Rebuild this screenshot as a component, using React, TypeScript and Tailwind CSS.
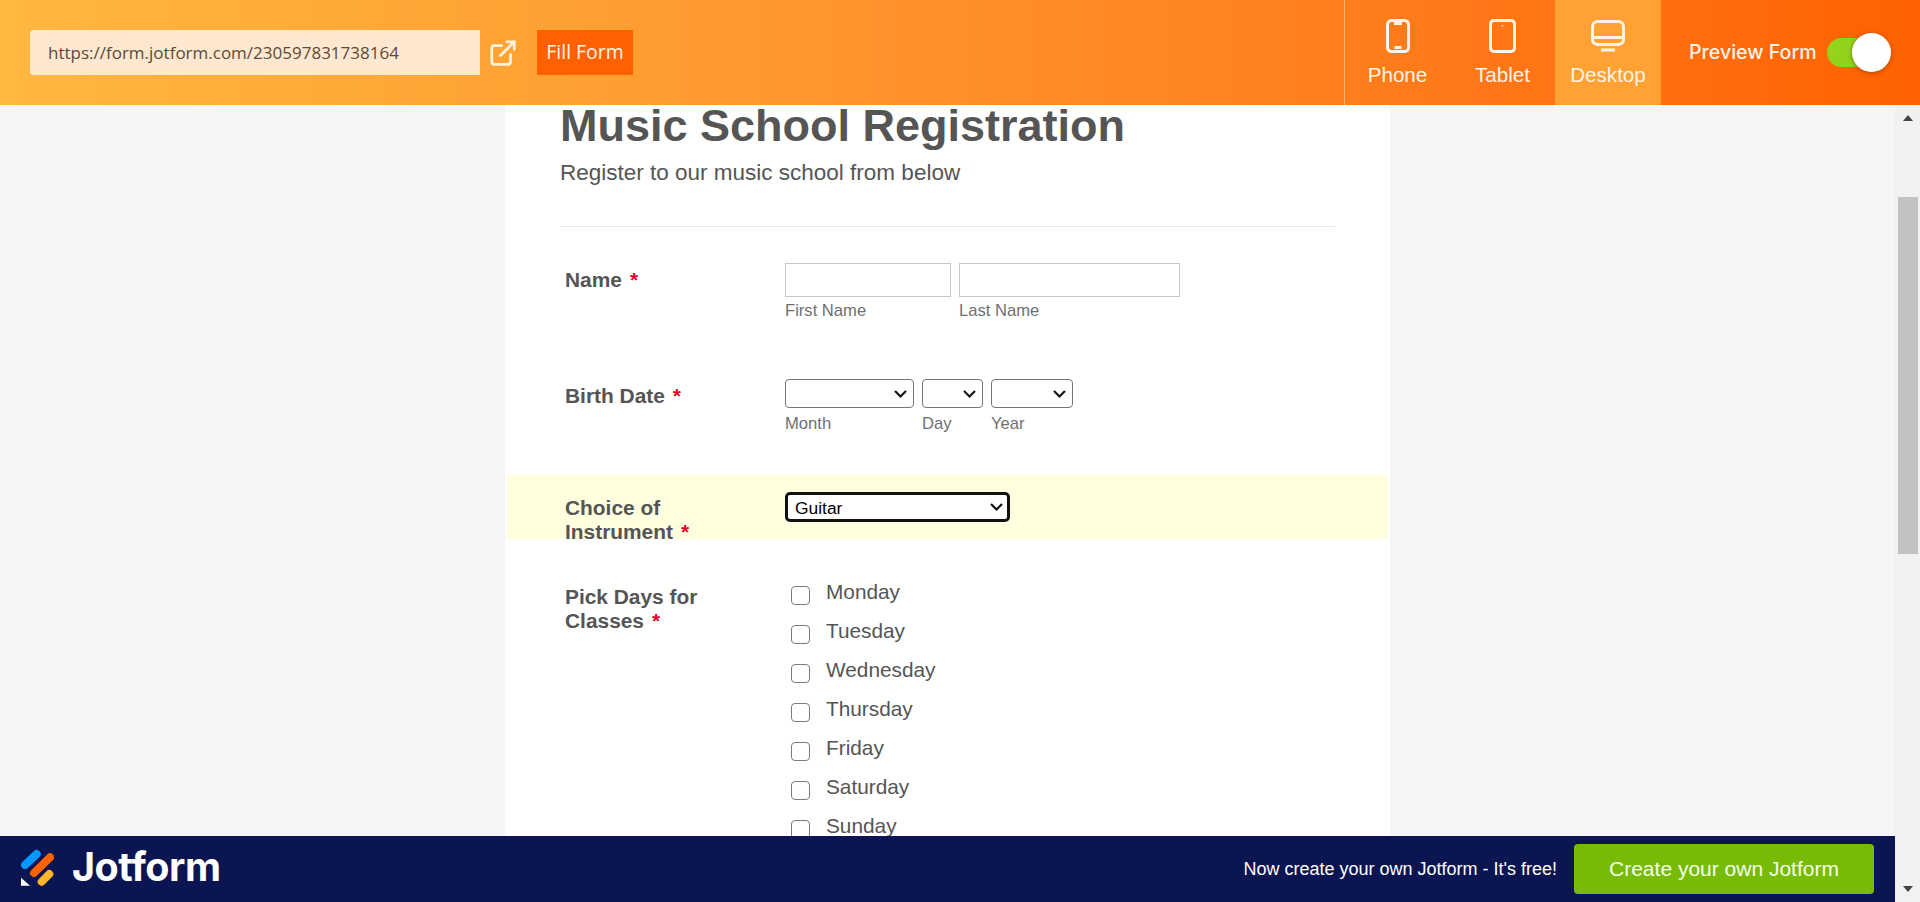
import { ExternalLink } from "lucide-react";

const days = ["Monday", "Tuesday", "Wednesday", "Thursday", "Friday", "Saturday", "Sunday"];

const Label = ({ children }: { children: React.ReactNode }) => (
  <div className="pl-[5px] text-[20.9px] font-bold leading-[24px] text-[#555555]">
    {children}
    <span className="ml-[8px] text-[#e8002b]">*</span>
  </div>
);

const Sub = ({ children, className }: { children: React.ReactNode; className: string }) => (
  <div className={`text-[16.6px] leading-[19px] text-[#6f6f6f] ${className}`}>{children}</div>
);

// windows style select: native arrow is much smaller here so it is drawn over
const Select = ({ className, value }: { className: string; value?: string }) => (
  <div className={`relative ${className}`}>
    <select
      defaultValue={value}
      className={`block h-full w-full appearance-none bg-white ${
        value
          ? "rounded-[5px] border-[3px] border-[#101010] pb-[3px] pl-[7px] text-[17.4px] text-black"
          : "rounded-[4px] border border-[#767676]"
      }`}
    >
      {value && <option>{value}</option>}
    </select>
    <svg
      className="pointer-events-none absolute right-[7px] top-1/2 -translate-y-1/2"
      width="13"
      height="9"
      viewBox="0 0 13 9"
      fill="none"
      stroke="#111111"
      strokeWidth="2.2"
    >
      <path d="M1 1.5 6.5 7 12 1.5" />
    </svg>
  </div>
);

const DeviceButton = ({
  label,
  active,
  children,
}: {
  label: string;
  active?: boolean;
  children: React.ReactNode;
}) => (
  <div
    className={`flex flex-col items-center pt-[19px] ${
      active ? "w-[106px] bg-[#ffa233]" : "w-[105px]"
    }`}
  >
    <div className="flex h-[34px] items-center">{children}</div>
    <div className="mt-[10px] text-[20.6px] leading-[24px] text-[#fff4e6]">{label}</div>
  </div>
);

export default function App() {
  return (
    <div className="flex h-[902px] w-[1920px] flex-col overflow-hidden bg-[#f5f5f5] font-['Liberation_Sans',Arial,sans-serif]">
      {/* top bar */}
      <header className="flex h-[105px] shrink-0 items-stretch bg-linear-to-r from-[#ffb840] to-[#ff6100]">
        <div className="flex flex-1 items-start pl-[30px] pt-[30px]">
          <div className="flex h-[45px] w-[450px] items-center rounded-l-[4px] bg-[#ffe8cf] pl-[18px] font-['Open_Sans',sans-serif] text-[17px] text-[#5b4a38]">
            https://form.jotform.com/230597831738164
          </div>
          <ExternalLink className="ml-[8px] mt-[8px] h-[30px] w-[30px] text-[#fff1dc]" strokeWidth={2.2} />
          <div className="ml-[19px] flex h-[45px] w-[96px] items-center justify-center bg-[#ff6100] pb-[2px] font-['Open_Sans',sans-serif] text-[19.4px] text-[#fff4e6]">
            Fill Form
          </div>
        </div>

        <div className="flex border-l border-[#ffb27a]">
          <DeviceButton label="Phone">
            <svg width="24" height="34" viewBox="0 0 24 34" fill="none" stroke="#fff4e6" strokeWidth="3">
              <rect x="1.5" y="1.5" width="21" height="31" rx="4" />
              <path d="M8 4.5h8M8.5 28.5h7" />
            </svg>
          </DeviceButton>
          <DeviceButton label="Tablet">
            <svg width="27" height="34" viewBox="0 0 27 34" fill="none" stroke="#fff4e6" strokeWidth="3">
              <rect x="1.5" y="1.5" width="24" height="31" rx="3.5" />
              <path d="M13.5 6v1.5" strokeWidth="1.5" />
            </svg>
          </DeviceButton>
          <DeviceButton label="Desktop" active>
            <svg width="34" height="32" viewBox="0 0 34 32" fill="none" stroke="#fff4e6" strokeWidth="3">
              <rect x="1.5" y="1.5" width="31" height="23" rx="5" />
              <path d="M1.5 17.5h31M10 30h14" />
            </svg>
          </DeviceButton>
        </div>

        <div className="flex w-[259px] items-center pl-[28px]">
          <span className="font-['Inter',sans-serif] text-[19.6px] font-medium text-[#fff4e6]">Preview Form</span>
          <div className="relative ml-[10px] h-[29px] w-[48px] rounded-full bg-[#92d41c]">
            <div className="absolute left-[25px] top-[-5px] h-[39px] w-[39px] rounded-full bg-white shadow-[0_1px_5px_rgba(120,50,0,0.6)]" />
          </div>
        </div>
      </header>

      <div className="flex min-h-0 flex-1">
        <div className="flex min-w-0 flex-1 flex-col">
          {/* form */}
          <main className="min-h-0 flex-1 overflow-hidden">
            <div className="mx-auto h-full w-[885px] bg-white px-[55px]">
              <h1 className="text-[45px] font-bold leading-[42px] text-[#555555]">Music School Registration</h1>
              <p className="mt-[13px] text-[22.5px] leading-[26px] text-[#555555]">Register to our music school from below</p>
              <div className="mt-[40px] border-t border-[#e6e6e6]" />

              <div className="mt-[36px] grid grid-cols-[225px_1fr]">
                <div className="pt-[5px]">
                  <Label>Name</Label>
                </div>
                <div className="flex gap-[8px]">
                  <div>
                    <input className="block h-[34px] w-[166px] border border-[#c8c8c8] bg-white" />
                    <Sub className="mt-[4px]">First Name</Sub>
                  </div>
                  <div>
                    <input className="block h-[34px] w-[221px] border border-[#c8c8c8] bg-white" />
                    <Sub className="mt-[4px]">Last Name</Sub>
                  </div>
                </div>
              </div>

              <div className="mt-[59px] grid grid-cols-[225px_1fr]">
                <div className="pt-[5px]">
                  <Label>Birth Date</Label>
                </div>
                <div className="flex gap-[8px]">
                  <div>
                    <Select className="h-[29px] w-[129px]" />
                    <Sub className="mt-[6px]">Month</Sub>
                  </div>
                  <div>
                    <Select className="h-[29px] w-[61px]" />
                    <Sub className="mt-[6px]">Day</Sub>
                  </div>
                  <div>
                    <Select className="h-[29px] w-[82px]" />
                    <Sub className="mt-[6px]">Year</Sub>
                  </div>
                </div>
              </div>

              <div className="mx-[-53px] mt-[42px] grid h-[64px] grid-cols-[225px_1fr] bg-[#ffffe0] px-[53px]">
                <div className="pt-[21px]">
                  <Label>
                    Choice of
                    <br />
                    Instrument
                  </Label>
                </div>
                <div className="pt-[17px]">
                  <Select className="h-[30px] w-[225px]" value="Guitar" />
                </div>
              </div>

              <div className="mt-[46px] grid grid-cols-[225px_1fr]">
                <div>
                  <Label>
                    Pick Days for
                    <br />
                    Classes
                  </Label>
                </div>
                <div className="flex flex-col gap-[15px] pl-[6px]">
                  {days.map((day) => (
                    <label key={day} className="flex h-[24px] items-start gap-[16px] text-[20.8px] leading-[24px] text-[#555555]">
                      <input
                        type="checkbox"
                        className="mt-[1px] h-[19px] w-[19px] shrink-0 appearance-none rounded-[4px] border-[1.5px] border-[#7a7a7a] bg-white"
                      />
                      <span className="mt-[-5px]">{day}</span>
                    </label>
                  ))}
                </div>
              </div>
            </div>
          </main>

          {/* bottom banner */}
          <footer className="flex h-[66px] shrink-0 items-center bg-[#0a1551] pr-[21px]">
            <svg className="ml-[20px]" width="34" height="40" viewBox="0 0 34 40" fill="none" strokeLinecap="round" strokeWidth="8">
              <path d="M5 16 16.7 5" stroke="#0099ff" />
              <path d="M14 24 30 8.3" stroke="#ff6100" />
              <path d="M21.7 32.7 29.3 25" stroke="#ffb629" />
              <path d="M1 28.7v8h9z" fill="#ffffff" stroke="none" />
            </svg>
            <span className="ml-[18px] mt-[-2px] font-['Inter',sans-serif] text-[39.5px] font-bold leading-none tracking-[-0.5px] text-white">
              Jotform
            </span>
            <span className="ml-auto text-[18px] text-white">Now create your own Jotform - It's free!</span>
            <div className="ml-[17px] flex h-[50px] w-[300px] items-center justify-center rounded-[4px] bg-[#78bb07] text-[21px] text-[#f6ffe6]">
              Create your own Jotform
            </div>
          </footer>
        </div>

        {/* scrollbar */}
        <div className="flex w-[25px] shrink-0 flex-col items-center bg-[#f1f1f1] pl-[1px]">
          <svg className="mt-[9px]" width="12" height="8" viewBox="0 0 12 8" fill="#444444">
            <path d="M6 1 11 7H1z" />
          </svg>
          <div className="mt-[75px] h-[357px] w-[20px] bg-[#c1c1c1]" />
          <svg className="mt-auto mb-[9px]" width="12" height="8" viewBox="0 0 12 8" fill="#444444">
            <path d="M6 7 1 1h10z" />
          </svg>
        </div>
      </div>
    </div>
  );
}
